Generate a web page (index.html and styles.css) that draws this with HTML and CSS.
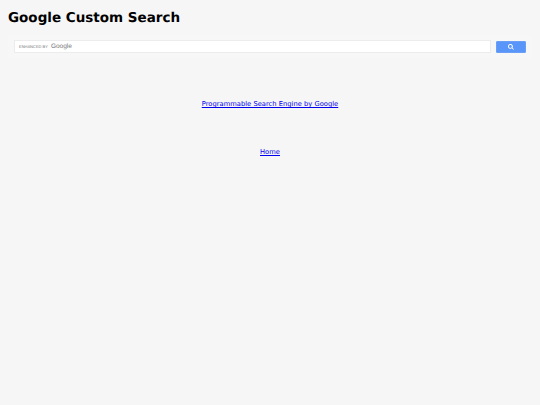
FILE: index.html
```html
<!DOCTYPE html>
<html lang="en">
<head>
    <meta charset="UTF-8">
    <title>Google Custom Search</title>
    <link rel="stylesheet" href="styles.css">
</head>
<body>

<h1 class="title">Google Custom Search</h1>

<div class="search-box">
    <div class="search-input">
        <span class="enhanced">ENHANCED BY</span>
        <span class="google">Google</span>
    </div>
    <button class="search-btn">
        <svg width="6" height="6" viewBox="0 0 13 13">
            <path d="M5.2 0a5.2 5.2 0 1 0 3.1 9.4l3.2 3.2 1.3-1.3-3.2-3.2A5.2 5.2 0 0 0 5.2 0zm0 2a3.2 3.2 0 1 1 0 6.4 3.2 3.2 0 0 1 0-6.4z" fill="#fff"/>
        </svg>
    </button>
</div>

<p class="link-row engine"><a href="#">Programmable Search Engine by Google</a></p>
<p class="link-row home"><a href="#">Home</a></p>

</body>
</html>
```

FILE: styles.css
```css
body {
    font-family: "DejaVu Sans", sans-serif;
    text-rendering: geometricPrecision;
    margin: 0;
    padding: 8px;
    background-color: #f6f6f6;
    color: #000;
}

.title {
    font-size: 13.5px;
    font-weight: bold;
    line-height: 20px;
    margin: 0 0 7px 0;
}

.search-box {
    display: flex;
    align-items: center;
    gap: 5px;
    padding: 5px 6px;
    background-color: #f7f7f7;
}

.search-input {
    flex: 1;
    display: flex;
    align-items: center;
    gap: 3px;
    height: 11px;
    padding-left: 4px;
    background-color: #fff;
    border: 1px solid #ececec;
}

.enhanced {
    font-family: "Liberation Sans", sans-serif;
    font-size: 4px;
    color: #777;
}

.google {
    font-family: "Liberation Sans", sans-serif;
    font-size: 6.5px;
    color: #777;
}

.search-btn {
    display: flex;
    align-items: center;
    justify-content: center;
    width: 30px;
    height: 12px;
    padding: 0;
    background-color: #5a95fa;
    border: 1px solid #6a9ff6;
    border-radius: 1px;
}

.link-row {
    font-size: 6.75px;
    line-height: 8px;
    text-align: center;
    margin: 0;
}

.engine {
    margin-top: 42px;
}

.home {
    margin-top: 40px;
}

a {
    color: #0000ee;
}
```
